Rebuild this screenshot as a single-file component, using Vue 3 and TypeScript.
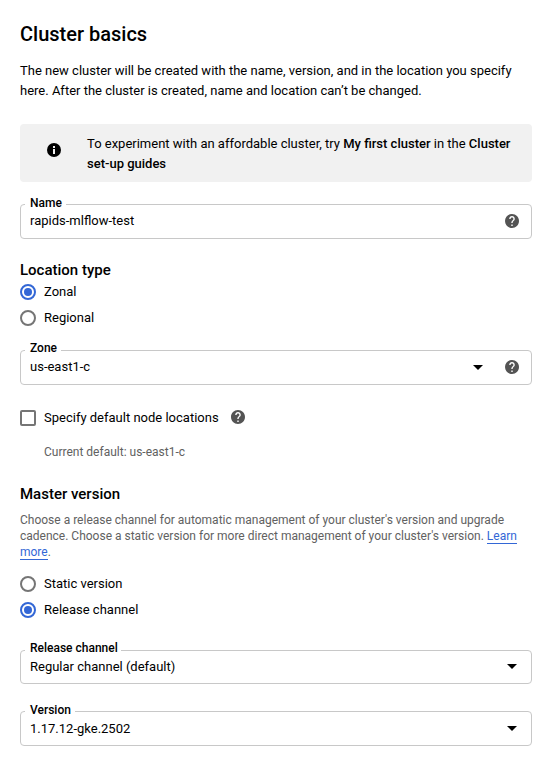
<script setup lang="ts">
import { ref } from 'vue'

const locationTypes = ['Zonal', 'Regional']
const locationType = ref('Zonal')
const versionModes = ['Static version', 'Release channel']
const versionMode = ref('Release channel')
const specifyNodes = ref(false)

const helpPath =
  'M12 2C6.48 2 2 6.48 2 12s4.48 10 10 10 10-4.48 10-10S17.52 2 12 2zm1 17h-2v-2h2v2zm2.07-7.75l-.9.92C13.45 12.9 13 13.5 13 15h-2v-.5c0-1.1.45-2.1 1.17-2.83l1.24-1.26c.37-.36.59-.86.59-1.41 0-1.1-.9-2-2-2s-2 .9-2 2H8c0-2.21 1.79-4 4-4s4 1.79 4 4c0 .88-.36 1.68-.93 2.25z'
</script>

<template>
  <main class="page">
    <h1 class="title">Cluster basics</h1>
    <p class="intro">
      The new cluster will be created with the name, version, and in the location you specify here.
      After the cluster is created, name and location can’t be changed.
    </p>

    <aside class="notice">
      <svg class="info" viewBox="0 0 14 14">
        <circle cx="7" cy="7" r="7" />
        <path d="M6 3h2v2H6zM6 6h2v5H6z" fill="#f1f1f1" />
      </svg>
      <p class="notice-text">
        To experiment with an affordable cluster, try <b>My first cluster</b> in the
        <b>Cluster set-up guides</b>
      </p>
    </aside>

    <div class="field name-field">
      <span class="label">Name</span>
      <span class="value">rapids-mlflow-test</span>
      <svg class="help" viewBox="2 2 20 20"><path :d="helpPath" /></svg>
    </div>

    <h2 class="heading location-heading">Location type</h2>
    <div class="radios">
      <label v-for="item in locationTypes" :key="item" class="option" @click="locationType = item">
        <span class="radio" :class="{ checked: locationType === item }"></span>{{ item }}
      </label>
    </div>

    <div class="field zone-field">
      <span class="label">Zone</span>
      <span class="value">us-east1-c</span>
      <svg class="arrow" viewBox="0 0 10 5"><path d="M0 0h10L5 5z" /></svg>
      <svg class="help" viewBox="2 2 20 20"><path :d="helpPath" /></svg>
    </div>

    <div class="check-row">
      <label class="option" @click="specifyNodes = !specifyNodes">
        <span class="box" :class="{ checked: specifyNodes }"></span>Specify default node locations
      </label>
      <svg class="help" viewBox="2 2 20 20"><path :d="helpPath" /></svg>
    </div>
    <p class="current">Current default: us-east1-c</p>

    <h2 class="heading master-heading">Master version</h2>
    <p class="hint">
      Choose a release channel for automatic management of your cluster's version and upgrade
      cadence. Choose a static version for more direct management of your cluster's version.
      <a class="link">Learn more</a>.
    </p>
    <div class="radios version-radios">
      <label v-for="item in versionModes" :key="item" class="option" @click="versionMode = item">
        <span class="radio" :class="{ checked: versionMode === item }"></span>{{ item }}
      </label>
    </div>

    <div class="field channel-field">
      <span class="label">Release channel</span>
      <span class="value">Regular channel (default)</span>
      <svg class="arrow" viewBox="0 0 10 5"><path d="M0 0h10L5 5z" /></svg>
    </div>
    <div class="field version-field">
      <span class="label">Version</span>
      <span class="value">1.17.12-gke.2502</span>
      <svg class="arrow" viewBox="0 0 10 5"><path d="M0 0h10L5 5z" /></svg>
    </div>
  </main>
</template>

<style>
body {
  background: #fff;
}
</style>

<style scoped>
.page {
  display: flex;
  flex-direction: column;
  box-sizing: border-box;
  height: 758px;
  padding: 20px 12px 0 20px;
  font-family: Roboto, 'Liberation Sans', sans-serif;
  font-size: 13px;
  line-height: 20px;
  color: #000;
}
.title,
.heading,
.intro,
.notice-text,
.current,
.hint {
  margin: 0;
}
.title {
  font-size: 20px;
  font-weight: 500;
  line-height: 28px;
}
.intro {
  margin-top: 13px;
}
.notice {
  display: flex;
  align-items: center;
  box-sizing: border-box;
  height: 58px;
  margin-top: 23px;
  padding: 2px 16px 0 27px;
  border-radius: 4px;
  background: #f1f1f1;
}
.notice b {
  font-weight: 500;
}
.info {
  flex: none;
  width: 14px;
  height: 14px;
  margin: 0 26px 8px 0;
}
.field {
  position: relative;
  display: flex;
  align-items: center;
  box-sizing: border-box;
  flex: none;
  height: 35px;
  padding: 0 12px 2px 9px;
  border: 1px solid #c8c8c8;
  border-radius: 4px;
}
.label {
  position: absolute;
  top: -10px;
  left: 4px;
  padding: 0 4px 0 5px;
  background: #fff;
  font-size: 12px;
  font-weight: 500;
  line-height: 16px;
}
.value {
  flex: 1;
}
.help {
  flex: none;
  width: 14px;
  height: 14px;
  fill: #545454;
}
.arrow {
  flex: none;
  width: 10px;
  height: 5px;
  margin: 1px 2px 0 0;
}
.arrow + .help {
  margin-left: 20px;
}
.name-field {
  margin-top: 22px;
}
.heading {
  font-size: 15px;
  font-weight: 500;
  line-height: 20px;
}
.location-heading {
  margin-top: 21px;
}
.radios {
  display: flex;
  flex-direction: column;
  gap: 6px;
  margin-top: 2px;
}
.option {
  display: flex;
  align-items: center;
  gap: 8px;
}
.radio,
.box {
  display: flex;
  align-items: center;
  justify-content: center;
  box-sizing: border-box;
  width: 16px;
  height: 16px;
  border: 2px solid #757575;
}
.radio {
  border-radius: 50%;
}
.radio.checked {
  border-color: #3367d6;
}
.radio.checked::after {
  width: 8px;
  height: 8px;
  border-radius: 50%;
  background: #3367d6;
  content: '';
}
.box {
  border-radius: 2px;
}
.box.checked {
  border-color: #3367d6;
  background: #3367d6;
}
.zone-field {
  margin-top: 22px;
}
.zone-field .label {
  top: -11px;
}
.check-row {
  display: flex;
  align-items: center;
  gap: 12px;
  margin-top: 23px;
}
.check-row .help {
  margin-bottom: 2px;
}
.current {
  margin: 14px 0 0 24px;
  font-size: 12px;
  color: #616161;
}
.master-heading {
  margin-top: 22px;
}
.hint {
  margin-top: 8px;
  font-size: 12px;
  line-height: 16px;
  color: #616161;
}
.link {
  border-bottom: 1px solid #3367d6;
  color: #3367d6;
}
.version-radios {
  margin-top: 14px;
}
.channel-field {
  height: 34px;
  margin-top: 30px;
}
.channel-field .arrow {
  margin-top: 0;
}
.channel-field .label {
  top: -11px;
  padding-right: 3px;
}
.channel-field .value,
.version-field .value {
  padding-top: 2px;
}
.version-field {
  margin-top: 27px;
}
</style>
